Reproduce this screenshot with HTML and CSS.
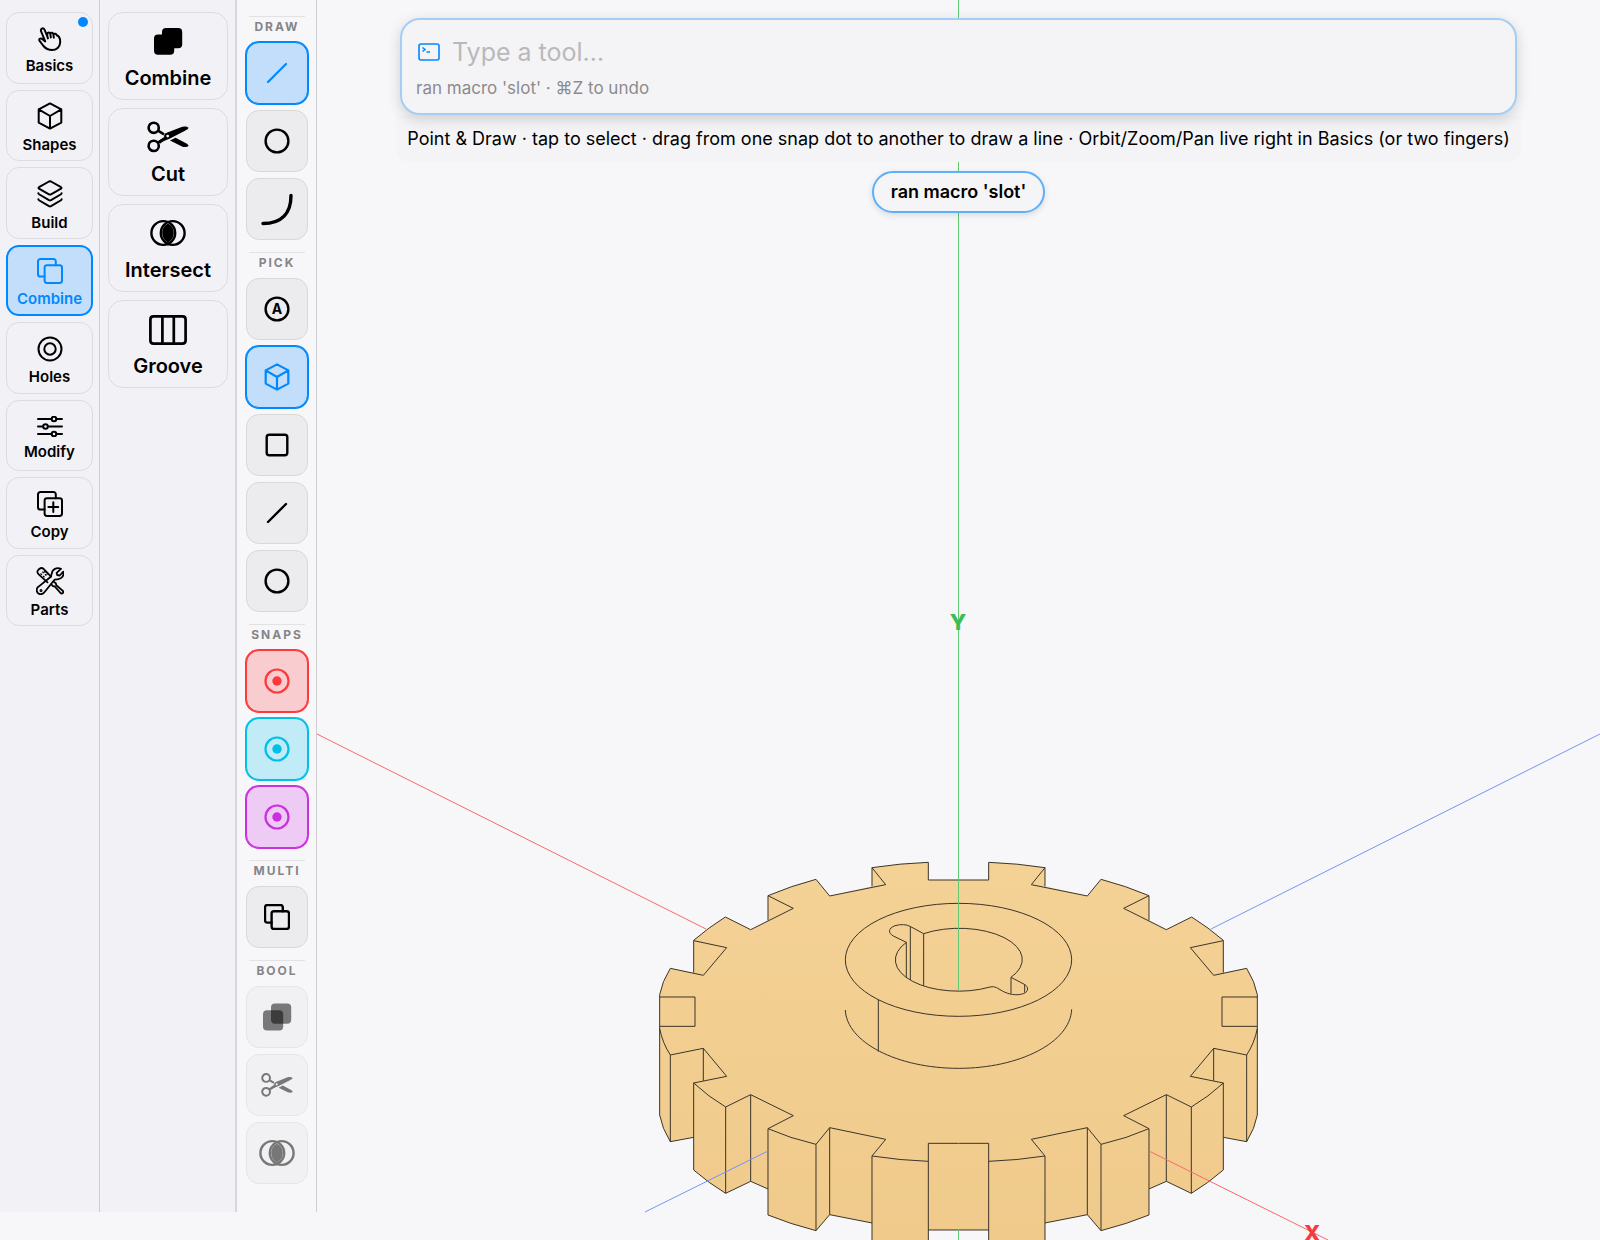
FILE: index.html
```html
<!DOCTYPE html>
<html lang="en">
<head>
<meta charset="utf-8">
<meta name="viewport" content="width=device-width, initial-scale=1">
<title>Gear – Modeler</title>
<link rel="stylesheet" href="styles.css">
</head>
<body>
<svg class="defs" width="0" height="0" aria-hidden="true">
  <defs>
    <symbol id="i-cube" viewBox="-13 -14 26 28">
      <path d="M0 -12.6 11.3 -6.6V6.6L0 12.6 -11.3 6.6V-6.6ZM-11.3 -6.6 0 0 11.3 -6.6M0 0V12.6"/>
    </symbol>
    <symbol id="i-copies" viewBox="0 0 26 26">
      <rect x="7.6" y="7.2" width="17.4" height="17.8" rx="2.4"/>
      <path d="M7.6 18.6H3.4A2.4 2.4 0 0 1 1 16.200V3.400A2.400 2.400 0 0 1 3.400 1H16.400A2.400 2.400 0 0 1 18.800 3.400V7.200"/>
    </symbol>
    <symbol id="i-scissors" viewBox="0 0 42 31">
      <g fill="none" stroke="currentColor" stroke-width="2.600">
        <circle cx="6.700" cy="6.300" r="5.100"/><circle cx="6.700" cy="24.400" r="5.100"/>
        <path d="M11 9.200 17 12.800M10.800 21.200 18 17"/>
      </g>
      <path fill="currentColor" fill-rule="evenodd" d="M12.400 18.800 17.200 15.600C16.800 12.400 18.600 11.600 21 10.800L34 5.700C37 4.700 40 4.900 41.600 6.300C41 7.600 39.500 8.500 38 9.200L22.500 17.300C19 18.900 16 19.300 13 22.200ZM20.700 13.200A1.400 1.400 0 1 0 20.700 16A1.400 1.400 0 1 0 20.700 13.200Z"/>
      <path fill="currentColor" d="M23 19 28.600 16.200 39 21.700C40.400 22.500 41.300 23.400 41.600 24.600C39.800 25.900 37 25.900 34.500 24.700Z"/>
    </symbol>
    <symbol id="i-overlap" viewBox="-18 -14 36 28">
      <g fill="none" stroke="currentColor" stroke-width="2.400"><circle cx="-4.700" r="11.900"/><circle cx="4.700" r="11.900"/></g>
      <path fill="currentColor" d="M0 -9.400A10.500 10.500 0 0 1 0 9.400A10.500 10.500 0 0 1 0 -9.400Z"/>
    </symbol>
    <symbol id="i-target" viewBox="-13 -13 26 26">
      <circle r="11.500"/><circle r="4.700" fill="currentColor" stroke="none"/>
    </symbol>
  </defs>
</svg>

<div class="app">
  <nav class="categories" aria-label="Tool categories">
    <button class="category" type="button">
      <svg class="icon" width="24" height="24" viewBox="0 0 24 24"><path d="M7.200 14.400 3.200 4.700C2 1.600 5.300 0 6.500 2.600L9.300 9.400V6.800C9.700 5 11.900 5.200 12.300 6.600C13 5.200 15 5.600 15.400 7.300C16.400 6.100 18.300 6.700 18.800 8.300C21 9.200 22.300 12.500 22.200 15.200C22 20 18.400 23 14 23C9.800 23 7.500 21.400 5.500 19L1.600 13.900C.6 12 2.200 10.900 3.800 11.700ZM9.300 9.400 9.900 11.400M12.300 6.800 12.800 10.400M15.400 7.300 15.800 10.600"/></svg>
      <span>Basics</span><i class="badge"></i>
    </button>
    <button class="category" type="button">
      <svg class="icon" width="26" height="28"><use href="#i-cube"/></svg><span>Shapes</span>
    </button>
    <button class="category" type="button">
      <svg class="icon" width="26" height="28" viewBox="0 0 26 28"><path d="M12 1.500Q13 1 14 1.500L24 7.200Q25 8 24 8.700L14 14.300Q13 14.800 12 14.300L2 8.700Q1 8 2 7.200ZM1.400 13.200Q1.600 14 2.400 14.500L12 20.200Q13 20.700 14 20.200L23.600 14.500Q24.400 14 24.600 13.200M1.400 19.200Q1.600 20 2.400 20.500L12 26.200Q13 26.700 14 26.200L23.600 20.500Q24.400 20 24.600 19.200"/></svg>
      <span>Build</span>
    </button>
    <button class="category is-active" type="button" aria-pressed="true">
      <svg class="icon" width="26" height="26"><use href="#i-copies"/></svg><span>Combine</span>
    </button>
    <button class="category" type="button">
      <svg class="icon" width="26" height="26" viewBox="-13 -13 26 26"><circle r="11.500"/><circle r="5.700"/></svg>
      <span>Holes</span>
    </button>
    <button class="category" type="button">
      <svg class="icon" width="26" height="21" viewBox="0 0 26 21"><path d="M1 3H14.500M19.500 3H25M1 10.500H6M11 10.500H25M1 18H14.500M19.500 18H25"/><circle cx="17" cy="3" r="2.300"/><circle cx="8.500" cy="10.500" r="2.300"/><circle cx="17" cy="18" r="2.300"/></svg>
      <span>Modify</span>
    </button>
    <button class="category" type="button">
      <svg class="icon" width="26" height="26" viewBox="0 0 26 26"><use href="#i-copies" width="26" height="26"/><path d="M16.300 11.200V21M11.400 16.100H21.200"/></svg>
      <span>Copy</span>
    </button>
    <button class="category" type="button">
      <svg class="icon icon-fine" width="28" height="28" viewBox="0 0 28 28">
        <path d="M11.500 15.300 3 7.600C1 5.800 1 4.300 2.200 3L3.600 1.700C5 .7 6.600 1 7.800 2.200L15 9.600"/>
        <path d="M4.500 6.500 8.500 10.300M6.300 4.800 10.700 9M8 4.200 11.500 7.600" stroke-width="1.200" stroke-dasharray="2 1.600" stroke-linecap="butt"/>
        <path d="M15.300 17.400 17 19.200 18.800 19.500 24.700 26.200Q26 27 27 25.800Q27.600 24.600 26.600 23.600L20.300 18.200 19.800 16.200 17.700 14.800"/>
        <path d="M25 1.900 20.600 5.900 21.200 8 23.700 8.500 27.300 4.600C28.300 8.200 26 12 21.500 12.300L18.500 12.700 8.400 25.300C6.500 27.800 3.300 27.700 1.700 25.800C0 23.600.6 21 2.600 19.600L14.800 9.800 15.800 6.500C16.300 2.300 20.600 0 25 1.900Z"/>
        <circle cx="5" cy="23.400" r=".6"/>
      </svg>
      <span>Parts</span>
    </button>
  </nav>

  <section class="tools" aria-label="Combine tools">
    <button class="tool" type="button">
      <svg class="tool-icon" width="30" height="32" viewBox="-15 -16 30 32"><rect x="-14" y="-6.500" width="20.200" height="20.200" rx="4"/><rect x="-6" y="-13" width="20.200" height="20.200" rx="4"/></svg>
      <span>Combine</span>
    </button>
    <button class="tool" type="button">
      <svg class="tool-icon" width="42" height="32"><use href="#i-scissors"/></svg><span>Cut</span>
    </button>
    <button class="tool" type="button">
      <svg class="tool-icon" width="36" height="32"><use href="#i-overlap"/></svg><span>Intersect</span>
    </button>
    <button class="tool" type="button">
      <svg class="tool-icon" width="38" height="32" viewBox="0 -2 38 32"><path fill="none" stroke="currentColor" stroke-width="2.700" d="M4.500 1.400H33.500Q36.600 1.400 36.600 4.500V25.500Q36.600 28.600 33.500 28.600H4.500Q1.400 28.600 1.400 25.500V4.500Q1.400 1.400 4.500 1.400ZM13.400 1.400V28.600M24.800 1.400V28.600"/></svg>
      <span>Groove</span>
    </button>
  </section>

  <aside class="rail" aria-label="Quick tools">
    <section class="group">
      <h2>DRAW</h2>
      <button class="key is-active" type="button" aria-label="Line" aria-pressed="true"><svg class="icon" width="26" height="26" viewBox="-13 -13 26 26"><path d="M-9 9 9 -9"/></svg></button>
      <button class="key" type="button" aria-label="Circle"><svg class="icon" width="26" height="26" viewBox="-13 -13 26 26"><circle r="11.400"/></svg></button>
      <button class="key" type="button" aria-label="Arc"><svg class="icon icon-heavy" width="34" height="34" viewBox="-17 -17 34 34"><path d="M-14 14.500C5 14.500 14 4 14 -13.500"/></svg></button>
    </section>
    <section class="group">
      <h2>PICK</h2>
      <button class="key" type="button" aria-label="Auto"><svg class="icon" width="26" height="26" viewBox="-13 -13 26 26"><circle r="11.400"/><text class="letter" y="5">A</text></svg></button>
      <button class="key is-active" type="button" aria-label="Body" aria-pressed="true"><svg class="icon" width="26" height="28"><use href="#i-cube"/></svg></button>
      <button class="key" type="button" aria-label="Face"><svg class="icon" width="26" height="26" viewBox="-13 -13 26 26"><rect x="-10.300" y="-10.300" width="20.600" height="20.600" rx="2.500"/></svg></button>
      <button class="key" type="button" aria-label="Edge"><svg class="icon" width="26" height="26" viewBox="-13 -13 26 26"><path d="M-9 9 9 -9"/></svg></button>
      <button class="key" type="button" aria-label="Loop"><svg class="icon" width="26" height="26" viewBox="-13 -13 26 26"><circle r="11.400"/></svg></button>
    </section>
    <section class="group">
      <h2>SNAPS</h2>
      <button class="key snap-red" type="button" aria-label="Red snaps" aria-pressed="true"><svg class="icon" width="26" height="26"><use href="#i-target"/></svg></button>
      <button class="key snap-cyan" type="button" aria-label="Cyan snaps" aria-pressed="true"><svg class="icon" width="26" height="26"><use href="#i-target"/></svg></button>
      <button class="key snap-purple" type="button" aria-label="Purple snaps" aria-pressed="true"><svg class="icon" width="26" height="26"><use href="#i-target"/></svg></button>
    </section>
    <section class="group">
      <h2>MULTI</h2>
      <button class="key" type="button" aria-label="Multi-select"><svg class="icon" width="26" height="26"><use href="#i-copies"/></svg></button>
    </section>
    <section class="group">
      <h2>BOOL</h2>
      <button class="key" type="button" aria-label="Union" disabled><svg width="30" height="28" viewBox="-15 -14 30 28"><g fill-opacity=".5"><rect x="-14" y="-6.700" width="20.200" height="20.200" rx="4"/><rect x="-6" y="-13.400" width="20.200" height="20.200" rx="4"/></g></svg></button>
      <button class="key" type="button" aria-label="Subtract" disabled><svg class="is-dim" width="32" height="26"><use href="#i-scissors"/></svg></button>
      <button class="key" type="button" aria-label="Intersection" disabled><svg class="is-dim" width="36" height="28"><use href="#i-overlap"/></svg></button>
    </section>
  </aside>

  <main class="stage">
    <svg class="scene" viewBox="317 0 1283 1240" preserveAspectRatio="xMidYMin slice" role="img" aria-label="Gear with a keyed hub">
      <defs>
        <linearGradient id="brass" x1="0" y1="0" x2="0" y2="1"><stop offset="0" stop-color="#f4d195"/><stop offset="1" stop-color="#efca8b"/></linearGradient>
        <g id="gear-half">
          <path stroke="none" d="M957 90H865V37Q780 40 696 53V109L569 138 528 88Q455 107 384 137V211L332 239 256 201Q205 233 161 271V368L91 355Q66 395 59 434V795Q66 835 91 875L161 862V960Q207 1000 257 1030L332 994 384 1017V1095Q450 1122 528 1142L569 1094 696 1119V1178Q780 1190 865 1194V1140H957Z"/>
          <path fill="none" d="M956 90H865V37Q780 40 696 53V109M569 138 528 88Q455 107 384 137V211M332 239 256 201Q205 233 161 271V368M91 355Q66 395 59 434V795Q66 835 91 875L161 862M161 960Q207 1000 257 1030L332 994 384 1017M384 1095Q450 1122 528 1142L569 1094 696 1119M696 1178Q780 1190 865 1194M865 1140H956M696 53 737 104 569 138M384 137 460 175 332 239M161 272 260 293 190 376 91 355M59 441H165V529H59M59 536Q68 580 91 615L190 595 260 679 161 699Q205 740 257 771L332 734 460 797 384 836Q450 865 528 883L569 833 737 868 696 918Q780 931 865 934M956 880H865V1194M91 615V875M190 595V692M161 699V960M257 771V1030M332 734V994M384 836V1095M528 883V1142M569 833V1094M696 918V1178"/>
        </g>
      </defs>
      <path class="axis-x" d="M317 734 706 929"/>
      <path class="axis-z" d="M1600 734 1211 929"/>
      <g class="solid" fill="url(#brass)">
        <g transform="translate(640 850) scale(.33333)">
          <use href="#gear-half"/>
          <use href="#gear-half" transform="translate(1911 0) scale(-1 1)"/>
        </g>
        <g fill="none" transform="translate(830 890) scale(.33333)">
          <ellipse cx="385.500" cy="209.500" rx="339.500" ry="169.500"/>
          <path d="M46 360C50 457 202 535 385.500 535S721 457 725 358M145 328V485"/>
          <path d="M281 131A189.500 93.700 0 0 1 543 262L583 283C596 290 597 305 580 311C560 318 535 313 517 303L500 293Q490 288 480 291A189.500 93.700 0 0 1 229 157L190 138C175 130 173 115 195 107C213 102 230 103 242 110ZM229 157V262M241 110V270M281 131V287M543 262V311M584 283V307"/>
        </g>
      </g>
      <path class="axis-y" d="M958.500 0V990M958.500 1230V1240"/>
      <path class="axis-x" d="M1149 1151 1328 1240"/>
      <path class="axis-z" d="M768 1151 645 1212"/>
      <text class="axis-label label-y" x="958" y="630">Y</text>
      <text class="axis-label label-x" x="1312" y="1241">X</text>
    </svg>

    <div class="overlay">
      <div class="hud">
        <form class="command">
          <label class="prompt">
            <svg class="prompt-icon" width="22" height="18" viewBox="0 0 22 18" role="img" aria-label="Command"><rect x="1" y="1" width="20" height="16" rx="2"/><path d="M4.500 4.500 7 6.500 4.500 8.500M8.500 9H12"/></svg>
            <input type="text" placeholder="Type a tool…">
          </label>
          <output class="result">ran macro 'slot' · ⌘Z to undo</output>
        </form>
        <p class="hint">Point &amp; Draw · tap to select · drag from one snap dot to another to draw a line · Orbit/Zoom/Pan live right in Basics (or two fingers)</p>
      </div>
      <p class="toast" role="status">ran macro 'slot'</p>
    </div>
  </main>
</div>
</body>
</html>
```

FILE: styles.css
```css
:root {
  --blue: #0088ff;
  --ink: #000;
  --canvas: #f7f7fa;
  --panel: #f2f1f6;
}

* { box-sizing: border-box; }

body {
  margin: 0;
  background: var(--canvas);
  color: var(--ink);
  font-family: Inter, "Liberation Sans", sans-serif;
}

button {
  margin: 0;
  padding: 0;
  border: 1px solid #dcdce0;
  background: none;
  color: inherit;
  font: inherit;
}

h2, p { margin: 0; }

.defs { position: absolute; }

.app {
  display: grid;
  grid-template-columns: 100px 137px 80px minmax(0, 1fr);
  min-height: 100vh;
}

.icon {
  fill: none;
  stroke: currentColor;
  stroke-width: 2px;
  stroke-linecap: round;
  stroke-linejoin: round;
}
.icon-fine { stroke-width: 1.8px; }

.categories, .tools, .rail { margin-bottom: 28px; }

/* First column: tool categories */
.categories {
  display: grid;
  grid-template-rows: repeat(4, 72px 71px);
  gap: 6px;
  align-content: start;
  padding: 12px 6px;
  border-right: 1px solid #cdcdd2;
  background: var(--panel);
}
.category {
  position: relative;
  display: flex;
  flex-direction: column;
  align-items: center;
  justify-content: center;
  gap: 8px;
  padding-top: 3px;
  border-radius: 13px;
  font-size: 15px;
  font-weight: 600;
  line-height: 14px;
}
.category.is-active {
  border: 2px solid var(--blue);
  background: #c2defa;
  color: var(--blue);
}
.badge {
  position: absolute;
  top: 4px;
  right: 4px;
  width: 10px;
  height: 10px;
  border-radius: 50%;
  background: var(--blue);
}

/* Second column: tools of the open category */
.tools {
  display: flex;
  flex-direction: column;
  gap: 8px;
  padding: 12px 7px 12px 8px;
  border-right: 2px solid #d6d6dc;
  background: var(--panel);
}
.tool {
  display: flex;
  flex-direction: column;
  align-items: center;
  gap: 9px;
  height: 88px;
  padding-top: 12px;
  border-radius: 15px;
  font-size: 20px;
  font-weight: 600;
  line-height: 24px;
}
.tool-icon { fill: currentColor; }

/* Third column: quick keys */
.rail {
  display: flex;
  flex-direction: column;
  gap: 12px;
  padding: 16px 8px 27px 9px;
  border-right: 1px solid #cdcdd2;
  background: #f7f7fa;
}
.group {
  display: flex;
  flex-direction: column;
  align-items: center;
  gap: 6px;
}
.group h2 {
  width: 56px;
  height: 20px;
  border-top: 1px solid #e2e2e5;
  color: #858587;
  font-size: 12px;
  font-weight: 700;
  line-height: 20px;
  letter-spacing: 2px;
  text-align: center;
}
.key {
  display: grid;
  place-items: center;
  width: 62px;
  height: 62px;
  border-color: #d8d8db;
  border-radius: 13px;
  background: #ececee;
}
.key .icon { stroke-width: 2.4px; }
.key .icon-heavy { stroke-width: 3.4px; }
.key:disabled {
  border-color: #e6e6e9;
  background: #f1f1f3;
  color: #000;
}
.key[aria-pressed="true"] {
  border-color: currentColor;
  box-shadow: 0 0 0 1px currentColor;
}
.key[aria-pressed="true"] .icon { stroke-width: 2.2px; }
.key.is-active { background: #c2defa; color: var(--blue); }
.key.snap-red { background: #f9cdd0; color: #ff383c; }
.key.snap-cyan { background: #c1ebf7; color: #00c0e8; }
.key.snap-purple { background: #edcbf5; color: #cb30e0; }
.is-dim { opacity: .5; }
.letter {
  fill: currentColor;
  stroke: none;
  font-size: 14px;
  font-weight: 700;
  text-anchor: middle;
}

/* Viewport */
.stage {
  display: grid;
  min-height: 100%;
  overflow: hidden;
}
.scene, .overlay { grid-area: 1 / 1; }
.scene {
  width: 100%;
  height: 100%;
  min-height: 0;
}
/* The solid is drawn at a third of its own units, so 3 gives a hairline */
.solid { stroke: #3a342a; stroke-width: 3px; }
.axis-x { stroke: #f76a6a; }
.axis-y { stroke: #5fca72; }
.axis-z { stroke: #7396f2; }
.axis-label {
  font-size: 22px;
  font-weight: 800;
  text-anchor: middle;
}
.label-x { fill: #f53d40; }
.label-y { fill: #3dbd50; }

.overlay {
  display: flex;
  flex-direction: column;
  align-items: center;
  gap: 9px;
  padding: 18px 79px;
}
.hud {
  display: flex;
  flex-direction: column;
  width: 100%;
}
.command {
  position: relative;
  margin: 0 4px;
  padding: 17px 14px 15px;
  border: 2px solid #a4cef6;
  border-radius: 20px;
  background: #f4f4f6;
  box-shadow: 0 4px 14px rgba(0, 0, 0, .16);
}
.prompt {
  display: flex;
  align-items: center;
  gap: 12px;
  padding-left: 2px;
}
.prompt-icon {
  fill: none;
  stroke: var(--blue);
  stroke-width: 1.6px;
}
.prompt input {
  flex: 1;
  min-width: 0;
  height: 30px;
  padding: 0;
  border: 0;
  outline: 0;
  background: none;
  color: inherit;
  font: 25px/30px Inter, "Liberation Sans", sans-serif;
}
.prompt input::placeholder { color: #b9b9bb; opacity: 1; }
.result {
  display: block;
  margin-top: 11px;
  color: #8b8b8d;
  font-size: 17px;
  line-height: 20px;
}
.hint {
  padding: 14px 8px 13px;
  border-radius: 0 0 12px 12px;
  background: #f4f4f6;
  font-size: 18px;
  line-height: 20px;
  text-align: center;
}
.toast {
  padding: 9px 17px;
  border: 2px solid #5cb0fa;
  border-radius: 21px;
  background: #f5f5f8;
  box-shadow: 0 2px 6px rgba(0, 0, 0, .12);
  font-size: 18px;
  font-weight: 600;
  line-height: 20px;
}
```
